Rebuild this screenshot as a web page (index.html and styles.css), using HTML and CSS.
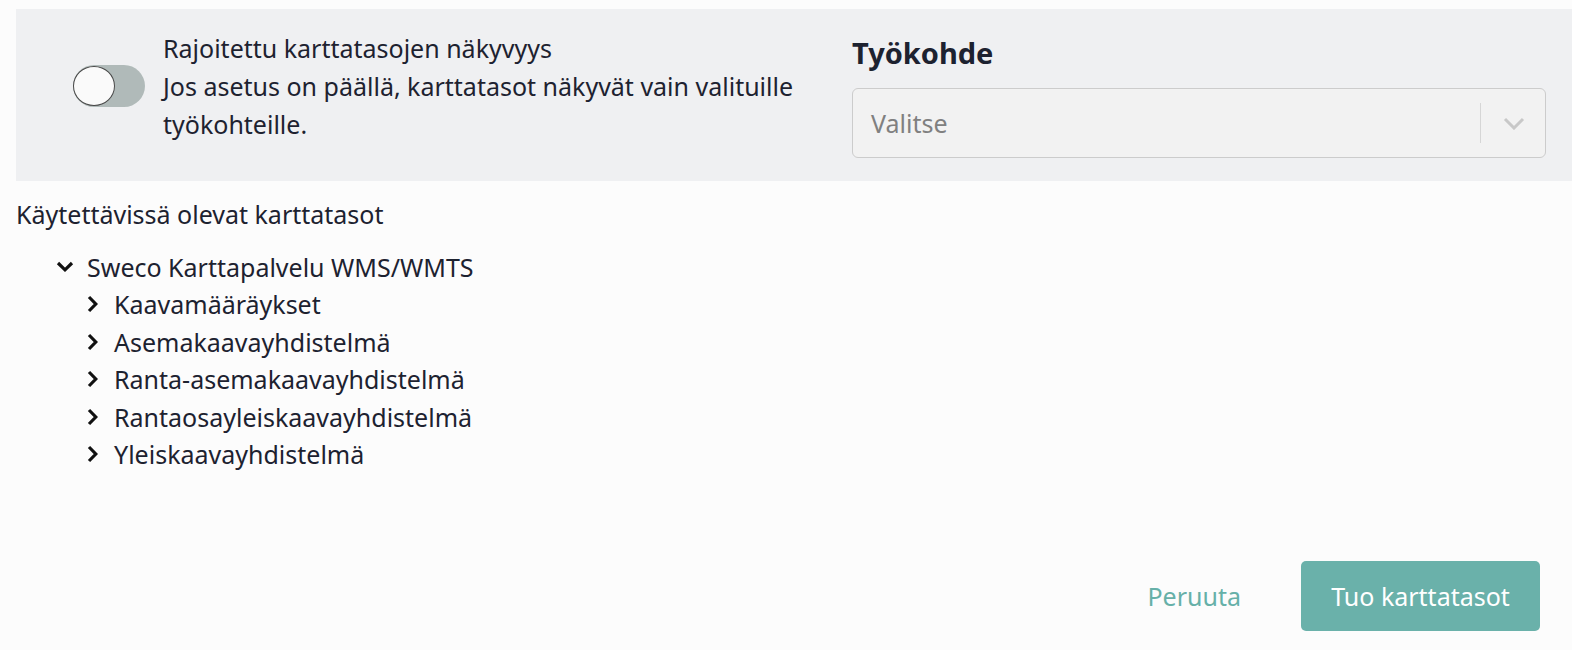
FILE: index.html
```html
<!DOCTYPE html>
<html lang="fi">
<head>
<meta charset="utf-8">
<link rel="stylesheet" href="styles.css">
</head>
<body>
<div class="page">
  <div class="panel">
    <div class="restrict">
      <div class="toggle"><div class="knob"></div></div>
      <div class="restrict-text">
        <div>Rajoitettu karttatasojen näkyvyys</div>
        <div>Jos asetus on päällä, karttatasot näkyvät vain valituille työkohteille.</div>
      </div>
    </div>
    <div class="target">
      <div class="target-label">Työkohde</div>
      <div class="select">
        <span class="placeholder">Valitse</span>
        <span class="sep"></span>
        <svg class="sel-chev" width="22" height="13" viewBox="0 0 22 13"><path d="M2 2 L11 11 L20 2" fill="none" stroke="#c8c8c8" stroke-width="3"/></svg>
      </div>
    </div>
  </div>
  <div class="available">Käytettävissä olevat karttatasot</div>
  <ul class="tree">
    <li class="node">
      <div class="row root"><svg class="chev-down" width="18" height="11" viewBox="0 0 18 11"><path d="M2 2 L9 8.8 L16 2" fill="none" stroke="#111" stroke-width="3.2"/></svg><span>Sweco Karttapalvelu WMS/WMTS</span></div>
      <ul class="children">
        <li class="row"><svg class="chev-right" width="11" height="18" viewBox="0 0 11 18"><path d="M2 2 L8.8 9 L2 16" fill="none" stroke="#111" stroke-width="3.2"/></svg><span>Kaavamääräykset</span></li>
        <li class="row"><svg class="chev-right" width="11" height="18" viewBox="0 0 11 18"><path d="M2 2 L8.8 9 L2 16" fill="none" stroke="#111" stroke-width="3.2"/></svg><span>Asemakaavayhdistelmä</span></li>
        <li class="row"><svg class="chev-right" width="11" height="18" viewBox="0 0 11 18"><path d="M2 2 L8.8 9 L2 16" fill="none" stroke="#111" stroke-width="3.2"/></svg><span>Ranta-asemakaavayhdistelmä</span></li>
        <li class="row"><svg class="chev-right" width="11" height="18" viewBox="0 0 11 18"><path d="M2 2 L8.8 9 L2 16" fill="none" stroke="#111" stroke-width="3.2"/></svg><span>Rantaosayleiskaavayhdistelmä</span></li>
        <li class="row"><svg class="chev-right" width="11" height="18" viewBox="0 0 11 18"><path d="M2 2 L8.8 9 L2 16" fill="none" stroke="#111" stroke-width="3.2"/></svg><span>Yleiskaavayhdistelmä</span></li>
      </ul>
    </li>
  </ul>
  <div class="actions">
    <button class="btn-cancel">Peruuta</button>
    <button class="btn-primary">Tuo karttatasot</button>
  </div>
</div>
</body>
</html>
```
FILE: styles.css
```css
html, body {
  margin: 0;
  padding: 0;
  background: #fcfcfc;
}
body {
  font-family: "Noto Sans", "Open Sans", sans-serif;
  color: #1d2230;
  width: 1572px;
  height: 650px;
  overflow: hidden;
}
.page {
  padding: 9px 0 0 16px;
}
.panel {
  background: #eff0f2;
  height: 172px;
  box-sizing: border-box;
  display: flex;
  align-items: flex-start;
}
.restrict {
  display: flex;
  align-items: center;
  padding: 20px 0 0 57px;
  width: 836px;
  flex: none;
  box-sizing: border-box;
  gap: 18px;
}
.toggle {
  flex: none;
  width: 72px;
  height: 42px;
  border-radius: 21px;
  background: #b0bab9;
  position: relative;
}
.knob {
  position: absolute;
  left: 0;
  top: 1px;
  width: 40px;
  height: 38px;
  border-radius: 50%;
  background: #fafafa;
  border: 1px solid #4a4a4a;
}
.restrict-text {
  font-size: 25px;
  line-height: 38px;
  width: 650px;
}
.target {
  width: 694px;
  flex: none;
  padding-top: 25px;
}
.target-label {
  font-size: 29px;
  font-weight: 700;
  line-height: 38px;
  color: #1d2230;
}
.select {
  margin-top: 16px;
  height: 70px;
  box-sizing: border-box;
  border: 1px solid #cccccc;
  border-radius: 6px;
  background: #f2f2f2;
  display: flex;
  align-items: center;
  padding: 0 20px 0 18px;
}
.placeholder {
  flex: 1;
  font-size: 25px;
  color: #808080;
}
.sep {
  width: 1px;
  height: 40px;
  background: #d6d6d6;
  margin-right: 22px;
}
.sel-chev {
  display: block;
}
.available {
  font-size: 25px;
  line-height: 32px;
  margin-top: 17px;
}
.tree, .children {
  list-style: none;
  margin: 0;
  padding: 0;
}
.tree {
  margin-top: 18px;
  padding-left: 40px;
}
.row {
  display: flex;
  align-items: center;
  height: 37.5px;
  font-size: 25px;
}
.root {
  gap: 13px;
}
.children {
  padding-left: 31px;
}
.children .row {
  gap: 16px;
}
.chev-down, .chev-right {
  flex: none;
  display: block;
}
.actions {
  display: flex;
  justify-content: flex-end;
  align-items: center;
  margin-top: 88px;
  padding-right: 32px;
  gap: 60px;
}
.btn-cancel {
  background: none;
  border: none;
  font-family: inherit;
  font-size: 25px;
  color: #66b0a8;
  padding: 0;
}
.btn-primary {
  width: 239px;
  height: 70px;
  background: #6ab1aa;
  border: none;
  border-radius: 5px;
  color: #ffffff;
  font-family: inherit;
  font-size: 25px;
}
```
